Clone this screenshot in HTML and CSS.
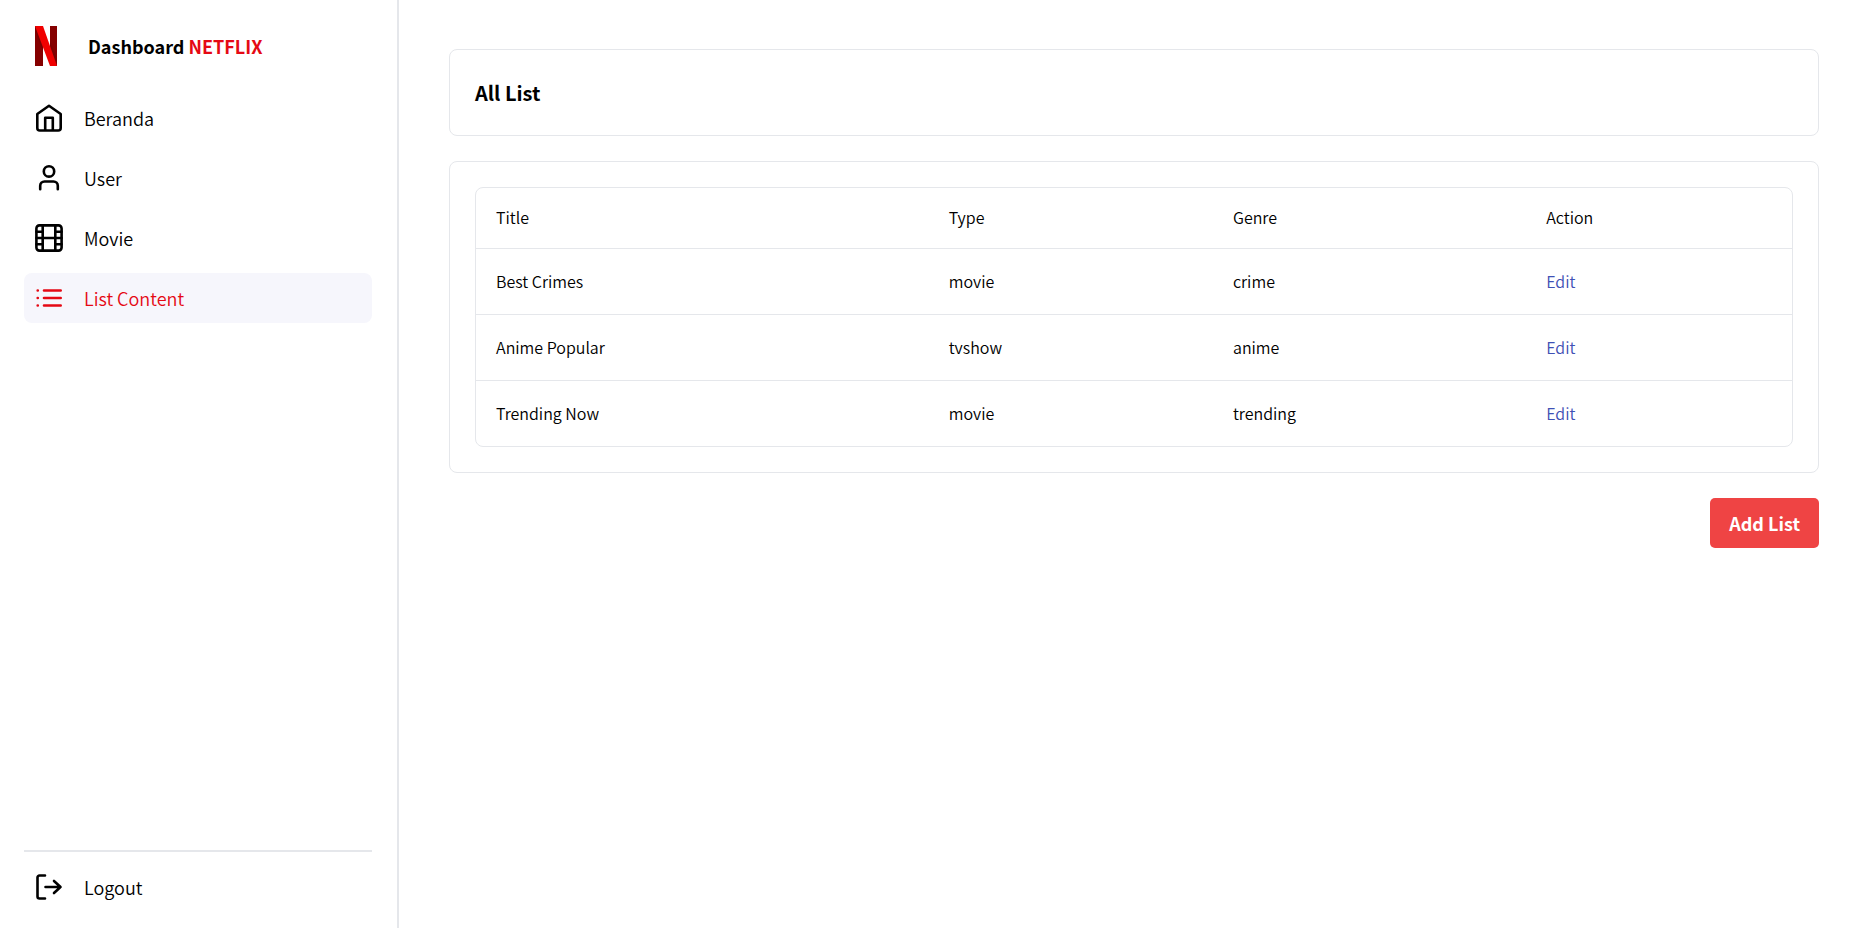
FILE: index.html
```html
<!DOCTYPE html>
<html lang="id">
<head>
<meta charset="utf-8">
<meta name="viewport" content="width=device-width, initial-scale=1">
<title>Dashboard Netflix</title>
<link rel="stylesheet" href="styles.css">
</head>
<body>
<div class="layout">
  <aside class="sidebar">
    <div class="brand">
      <svg class="brand-logo" viewBox="0 0 22 40" aria-hidden="true">
        <path fill="#850000" d="M0 0h8v40H0zM15 0h7v40h-7z"/>
        <path fill="#5c0000" opacity=".25" d="M0 0l8 19v7L0 5zM15 15l7 18v5l-7-17z"/>
        <path fill="#f00000" d="M0 0h8l14 40h-7z"/>
      </svg>
      <p class="brand-name">Dashboard <span class="brand-accent">NETFLIX</span></p>
    </div>
    <nav class="menu">
      <a class="menu-item" href="#beranda">
        <svg class="icon" viewBox="0 0 30 30" aria-hidden="true"><path d="M3.300 11 15 2.800 26.700 11v14a2.500 2.500 0 0 1-2.500 2.500H5.800A2.500 2.500 0 0 1 3.300 25zM11.200 27V14.800h7.600V27"/></svg>
        <span>Beranda</span>
      </a>
      <a class="menu-item" href="#user">
        <svg class="icon" viewBox="0 0 30 30" aria-hidden="true"><circle cx="15" cy="8.400" r="5.200"/><path d="M6.200 26.300v-3.500a4.300 4.300 0 0 1 4.300-4.300h9a4.300 4.300 0 0 1 4.300 4.300v3.500"/></svg>
        <span>User</span>
      </a>
      <a class="menu-item" href="#movie">
        <svg class="icon" viewBox="0 0 30 30" aria-hidden="true"><rect x="2.400" y="2.400" width="25.200" height="25.200" rx="3"/><path d="M8.700 2.500v25M21.300 2.500v25M2.500 15h25M2.500 8.800h6.200M2.500 21.200h6.200M21.300 8.800h6.200M21.300 21.200h6.200"/></svg>
        <span>Movie</span>
      </a>
      <a class="menu-item menu-item-active" href="#list" aria-current="page">
        <svg class="icon" viewBox="0 0 30 30" aria-hidden="true"><path d="M10 7.500h16.700M10 15h16.700M10 22.500h16.700M3.700 7.500h.1M3.700 15h.1M3.700 22.500h.1"/></svg>
        <span>List Content</span>
      </a>
    </nav>
    <div class="sidebar-footer">
      <a class="menu-item" href="#logout">
        <svg class="icon" viewBox="0 0 30 30" aria-hidden="true"><path d="M11 3.500H5.500a2 2 0 0 0-2 2v19a2 2 0 0 0 2 2H11M11.500 15h15M20 9l6.500 6-6.500 6"/></svg>
        <span>Logout</span>
      </a>
    </div>
  </aside>
  <main class="content">
    <header class="card">
      <h1 class="page-title">All List</h1>
    </header>
    <section class="card">
      <div class="table-frame">
        <table class="list-table">
          <colgroup><col class="col-title"><col class="col-type"><col class="col-genre"><col class="col-action"></colgroup>
          <thead>
            <tr><th scope="col">Title</th><th scope="col">Type</th><th scope="col">Genre</th><th scope="col">Action</th></tr>
          </thead>
          <tbody>
            <tr><td>Best Crimes</td><td>movie</td><td>crime</td><td><a class="edit-link" href="#edit-1">Edit</a></td></tr>
            <tr><td>Anime Popular</td><td>tvshow</td><td>anime</td><td><a class="edit-link" href="#edit-2">Edit</a></td></tr>
            <tr><td>Trending Now</td><td>movie</td><td>trending</td><td><a class="edit-link" href="#edit-3">Edit</a></td></tr>
          </tbody>
        </table>
      </div>
    </section>
    <button class="add-button" type="button">Add List</button>
  </main>
</div>
</body>
</html>
```
FILE: styles.css
```css
* {
  box-sizing: border-box;
}

body {
  margin: 0;
  background: #fff;
  color: #000;
  font-family: "Noto Sans CJK JP", "Noto Sans", sans-serif;
  font-size: 18px;
  font-weight: 350;
  line-height: 30px;
}

a {
  color: inherit;
  text-decoration: none;
}

.layout {
  display: flex;
  min-height: 100vh;
}

.sidebar {
  display: flex;
  flex-direction: column;
  flex: 0 0 399px;
  padding: 26px 25px 16px 24px;
  border-right: 2px solid #e5e7eb;
}

.brand {
  display: flex;
  align-items: center;
  gap: 31px;
  padding-left: 11px;
}

.brand-logo {
  width: 22px;
  height: 40px;
}

.brand-name {
  margin: 0;
  font-weight: 700;
}

.brand-accent {
  color: #e50914;
}

.menu {
  display: flex;
  flex-direction: column;
  gap: 10px;
  margin-top: 27px;
}

.menu-item {
  display: flex;
  align-items: center;
  gap: 20px;
  padding: 10px;
  border-radius: 8px;
}

.menu-item-active {
  background: #f6f6fc;
  color: #e50914;
}

.icon {
  width: 30px;
  height: 30px;
  fill: none;
  stroke: currentColor;
  stroke-width: 2.6;
  stroke-linecap: round;
  stroke-linejoin: round;
}

.sidebar-footer {
  margin-top: auto;
  padding-top: 10px;
  border-top: 2px solid #e5e7eb;
}

.content {
  display: flex;
  flex-direction: column;
  gap: 25px;
  flex: 1;
  padding: 49px 49px 49px 50px;
}

.card {
  padding: 25px;
  border: 1px solid #e5e7eb;
  border-radius: 8px;
}

.page-title {
  margin: 0;
  font-size: 20px;
  line-height: 35px;
  font-weight: 700;
}

.table-frame {
  border: 1px solid #e5e7eb;
  border-radius: 8px;
  overflow: hidden;
}

.list-table {
  width: 100%;
  table-layout: fixed;
  border-collapse: collapse;
  font-size: 16px;
  line-height: 25px;
  text-align: left;
}

.col-title {
  width: 34.4%;
}

.col-type {
  width: 21.6%;
}

.col-genre {
  width: 23.8%;
}

.list-table th {
  padding: 17px 20px 18px;
  font-weight: inherit;
}

.list-table td {
  padding: 20px;
  border-top: 1px solid #e5e7eb;
}

.edit-link {
  color: #3f51b5;
}

.add-button {
  align-self: flex-end;
  padding: 10px 19px;
  border: 0;
  border-radius: 5px;
  background: #ef4444;
  color: #fff;
  font: inherit;
  font-weight: 700;
  cursor: pointer;
}
```
